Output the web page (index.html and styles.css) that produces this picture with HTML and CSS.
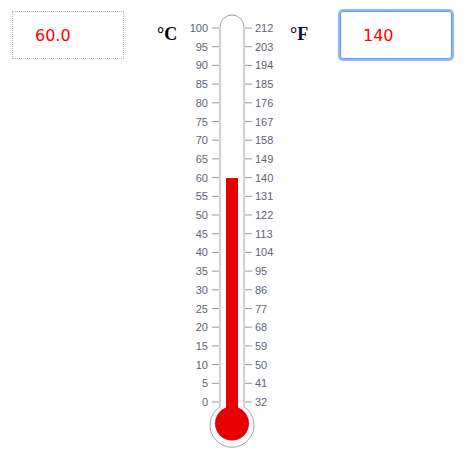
FILE: index.html
```html
<!DOCTYPE html>
<html>
<head>
<meta charset="utf-8">
<link rel="stylesheet" href="styles.css">
</head>
<body>
<div class="row">
  <input class="field" type="text" value="60.0">
  <div class="unit unit-c">°C</div>
  <svg class="thermo" width="100" height="455" viewBox="0 0 100 455">
    <path class="tube" d="M38,406.8 L38,27 A12,12 0 0 1 62,27 L62,406.8 A22,22 0 1 1 38,406.8 Z"/>
    <rect class="mercury" x="44" y="178" width="12" height="246"/>
    <circle class="mercury" cx="50" cy="423.5" r="17"/>
    <g class="ticks">
      <g transform="translate(0,28)"><line x1="30" x2="37"/><line x1="63" x2="70"/><text class="l" x="26">100</text><text class="r" x="73">212</text></g>
      <g transform="translate(0,46.7)"><line x1="30" x2="37"/><line x1="63" x2="70"/><text class="l" x="26">95</text><text class="r" x="73">203</text></g>
      <g transform="translate(0,65.4)"><line x1="30" x2="37"/><line x1="63" x2="70"/><text class="l" x="26">90</text><text class="r" x="73">194</text></g>
      <g transform="translate(0,84.1)"><line x1="30" x2="37"/><line x1="63" x2="70"/><text class="l" x="26">85</text><text class="r" x="73">185</text></g>
      <g transform="translate(0,102.8)"><line x1="30" x2="37"/><line x1="63" x2="70"/><text class="l" x="26">80</text><text class="r" x="73">176</text></g>
      <g transform="translate(0,121.5)"><line x1="30" x2="37"/><line x1="63" x2="70"/><text class="l" x="26">75</text><text class="r" x="73">167</text></g>
      <g transform="translate(0,140.2)"><line x1="30" x2="37"/><line x1="63" x2="70"/><text class="l" x="26">70</text><text class="r" x="73">158</text></g>
      <g transform="translate(0,158.9)"><line x1="30" x2="37"/><line x1="63" x2="70"/><text class="l" x="26">65</text><text class="r" x="73">149</text></g>
      <g transform="translate(0,177.6)"><line x1="30" x2="37"/><line x1="63" x2="70"/><text class="l" x="26">60</text><text class="r" x="73">140</text></g>
      <g transform="translate(0,196.3)"><line x1="30" x2="37"/><line x1="63" x2="70"/><text class="l" x="26">55</text><text class="r" x="73">131</text></g>
      <g transform="translate(0,215)"><line x1="30" x2="37"/><line x1="63" x2="70"/><text class="l" x="26">50</text><text class="r" x="73">122</text></g>
      <g transform="translate(0,233.7)"><line x1="30" x2="37"/><line x1="63" x2="70"/><text class="l" x="26">45</text><text class="r" x="73">113</text></g>
      <g transform="translate(0,252.4)"><line x1="30" x2="37"/><line x1="63" x2="70"/><text class="l" x="26">40</text><text class="r" x="73">104</text></g>
      <g transform="translate(0,271.1)"><line x1="30" x2="37"/><line x1="63" x2="70"/><text class="l" x="26">35</text><text class="r" x="73">95</text></g>
      <g transform="translate(0,289.8)"><line x1="30" x2="37"/><line x1="63" x2="70"/><text class="l" x="26">30</text><text class="r" x="73">86</text></g>
      <g transform="translate(0,308.5)"><line x1="30" x2="37"/><line x1="63" x2="70"/><text class="l" x="26">25</text><text class="r" x="73">77</text></g>
      <g transform="translate(0,327.2)"><line x1="30" x2="37"/><line x1="63" x2="70"/><text class="l" x="26">20</text><text class="r" x="73">68</text></g>
      <g transform="translate(0,345.9)"><line x1="30" x2="37"/><line x1="63" x2="70"/><text class="l" x="26">15</text><text class="r" x="73">59</text></g>
      <g transform="translate(0,364.6)"><line x1="30" x2="37"/><line x1="63" x2="70"/><text class="l" x="26">10</text><text class="r" x="73">50</text></g>
      <g transform="translate(0,383.3)"><line x1="30" x2="37"/><line x1="63" x2="70"/><text class="l" x="26">5</text><text class="r" x="73">41</text></g>
      <g transform="translate(0,402)"><line x1="30" x2="37"/><line x1="63" x2="70"/><text class="l" x="26">0</text><text class="r" x="73">32</text></g>
    </g>
  </svg>
  <div class="unit unit-f">°F</div>
  <input class="field field-focus" type="text" value="140">
</div>
</body>
</html>
```

FILE: styles.css
```css
html, body {
  margin: 0;
  padding: 0;
  background: #fff;
}

.row {
  display: flex;
  align-items: flex-start;
}

.field {
  box-sizing: border-box;
  width: 112px;
  height: 48px;
  margin-top: 11px;
  padding: 0 0 0 22px;
  border: 1px dotted #b8b8b8;
  background: #fff;
  color: #ff0000;
  font-family: "DejaVu Sans", sans-serif;
  font-size: 16px;
  outline: none;
}

.row > .field:first-child {
  margin-left: 12px;
}

.field-focus {
  border: 1px solid #5f9ef0;
  border-radius: 3px;
  box-shadow: 0 0 0 2px #8fbaf6;
}

.unit {
  font-family: "Liberation Serif", serif;
  font-weight: bold;
  font-size: 18px;
  line-height: 20px;
  color: #000;
  margin-top: 24px;
}

.unit-c {
  margin-left: 33px;
  width: 25px;
}

.unit-f {
  margin-left: 8px;
  width: 50px;
  color: #0a0f2a;
}

.thermo {
  display: block;
  flex: none;
}

.tube {
  fill: #fff;
  stroke: #a4a4a4;
  stroke-width: 1;
}

.mercury {
  fill: #e60000;
}

.ticks line {
  stroke: #9a9a9a;
  stroke-width: 1;
}

.ticks text {
  font-family: "Liberation Sans", Arial, sans-serif;
  font-size: 11px;
  fill: #5c6573;
  dominant-baseline: central;
}

.ticks text.l {
  text-anchor: end;
}

.ticks text.r {
  text-anchor: start;
}
```
